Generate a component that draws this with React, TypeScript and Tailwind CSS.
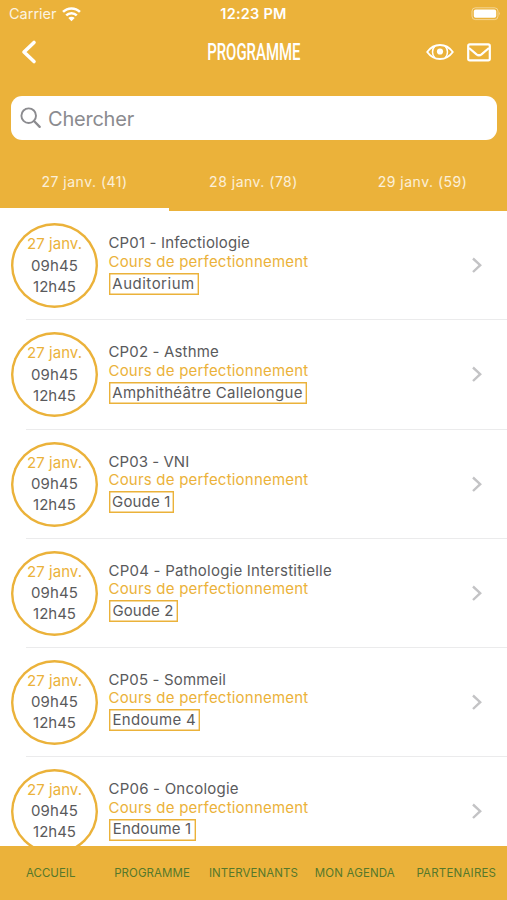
import React from 'react'

interface Session {
  title: string
  titleClass: string
  room: string
  roomClass: string
}

const sessions: Session[] = [
  { title: 'CP01 - Infectiologie', titleClass: 'tracking-[0.15px]', room: 'Auditorium', roomClass: 'w-[90px] tracking-[0.5px]' },
  { title: 'CP02 - Asthme', titleClass: 'tracking-[0.15px]', room: 'Amphithéâtre Callelongue', roomClass: 'w-[198px] tracking-[0.3px]' },
  { title: 'CP03 - VNI', titleClass: 'tracking-[0.05px]', room: 'Goude 1', roomClass: 'w-[65.5px] tracking-[0.15px]' },
  { title: 'CP04 - Pathologie Interstitielle', titleClass: 'tracking-[0.23px]', room: 'Goude 2', roomClass: 'w-[69px] tracking-[0.1px]' },
  { title: 'CP05 - Sommeil', titleClass: 'tracking-[0.15px]', room: 'Endoume 4', roomClass: 'w-[91.500px] tracking-[0.3px]' },
  { title: 'CP06 - Oncologie', titleClass: 'tracking-[0.22px]', room: 'Endoume 1', roomClass: 'w-[87px] tracking-[0.15px]' },
]

const days = ['27 janv. (41)', '28 janv. (78)', '29 janv. (59)']

const links = [
  { label: 'ACCUEIL', className: 'tracking-[0px]' },
  { label: 'PROGRAMME', className: 'tracking-[0.08px]' },
  { label: 'INTERVENANTS', className: 'tracking-[0.08px]' },
  { label: 'MON AGENDA', className: 'tracking-[0.15px]' },
  { label: 'PARTENAIRES', className: 'tracking-[0.2px]' },
]

const StatusBar: React.FC = () => (
  <div className="grid h-[28px] grid-cols-3 items-center px-[9px] text-[14.5px] leading-[28px] text-white">
    <div className="flex items-center gap-[5px]">
      <span className="opacity-85">Carrier</span>
      <svg width="19" height="15" viewBox="0 0 18 14" fill="none" stroke="#fff" strokeWidth="2.4">
        <path d="M1 4.6a11.3 11.3 0 0 1 16 0" />
        <path d="M4 7.8a7.1 7.1 0 0 1 10 0" />
        <path d="M9 13.4 6 10.3a4.2 4.2 0 0 1 6 0z" fill="#fff" stroke="none" />
      </svg>
    </div>
    <span className="text-center font-semibold tracking-[0.25px]">12:23 PM</span>
    <svg className="-mr-[3px] ml-auto" width="30" height="14" viewBox="0 0 30 14">
      <rect x="1" y="0.8" width="26" height="11.8" rx="3.4" fill="none" stroke="#fff" strokeOpacity="0.45" />
      <rect x="2.8" y="2.6" width="22.4" height="8.2" rx="1.8" fill="#fff" />
      <path d="M28.2 4.8q1.6 1.8 0 3.8z" fill="#fff" fillOpacity="0.5" />
    </svg>
  </div>
)

const NavBar: React.FC = () => (
  <div className="grid h-[48px] grid-cols-3 items-center pr-[16px] pl-[20px] text-white">
    <svg width="18" height="26" viewBox="0 0 18 26" fill="none" stroke="#fff" strokeWidth="3.6" strokeLinecap="round" strokeLinejoin="round">
      <path d="M14 3.500 4 13l10 9.500" />
    </svg>
    <div className="flex justify-center">
      <h1 className="origin-center -translate-x-[2px] translate-y-[0.500px] scale-x-[0.65] font-[Roboto] text-[23px] leading-[26px] font-medium">PROGRAMME</h1>
    </div>
    <div className="flex items-center justify-end gap-[13px]">
      <svg width="28" height="18" viewBox="0 0 28 18" fill="none" stroke="#fff" strokeWidth="1.800">
        <path d="M1.200 9C4.500 4.400 9 2 14 2s9.500 2.400 12.800 7C23.500 13.600 19 16 14 16S4.500 13.600 1.200 9z" />
        <path d="M8.600 3.600a8 8 0 0 0 0 10.800M19.400 3.600a8 8 0 0 1 0 10.800" strokeWidth="1.500" />
        <circle cx="14" cy="8.500" r="3.100" fill="#fff" stroke="none" />
      </svg>
      <svg width="24" height="19" viewBox="0 0 24 19" fill="none" stroke="#fff" strokeWidth="2.200" strokeLinejoin="round">
        <rect x="1.200" y="1.400" width="21.600" height="16" rx="1.600" />
        <path d="m2 5 7.500 6.300q2.500 1.900 5 0L22 5" />
      </svg>
    </div>
  </div>
)

const SearchBox: React.FC = () => (
  <div className="mx-[10.5px] mt-[20px] flex h-[44px] items-center rounded-[11px] bg-white pl-[9.5px] text-[#8b8b8f]">
    <svg width="22" height="22" viewBox="0 0 22 22" fill="none" stroke="currentColor" strokeWidth="1.900" strokeLinecap="round">
      <circle cx="8.700" cy="8.700" r="7.300" />
      <path d="m14 14 5.700 5.900" strokeWidth="2.300" />
    </svg>
    <span className="ml-[6px] translate-y-[0.5px] text-[20px] leading-[44px] tracking-[-0.22px]">Chercher</span>
  </div>
)

const SessionRow: React.FC<{ session: Session }> = ({ session }) => (
  <li className="relative flex h-[109.15px] items-start pt-[12px] pl-[11px]">
    <div className="flex h-[85px] w-[87px] shrink-0 flex-col items-center rounded-[50%] pt-[10px] text-[15px] leading-[21.2px] shadow-[inset_0_0_0_2.4px_#ebb23a]">
      <span className="tracking-[0.05px] text-[#ebb23a]">27 janv.</span>
      <span className="tracking-[0.1px]">09h45</span>
      <span>12h45</span>
    </div>
    <div className="ml-[10.5px] flex flex-1 flex-col items-start pt-[11px] text-[15px] leading-[18.5px] whitespace-nowrap">
      <span className={session.titleClass}>{session.title}</span>
      <span className="tracking-[0.21px] text-[#ebb23a]">Cours de perfectionnement</span>
      <span className={`mt-[1.5px] flex h-[22px] items-center justify-center shadow-[inset_0_0_0_1.4px_#ebb23a] ${session.roomClass}`}>
        {session.room}
      </span>
    </div>
    <svg className="mt-[33px] mr-[24px]" width="12" height="18" viewBox="0 0 12 18" fill="none" stroke="#c3c3c5" strokeWidth="2.400">
      <path d="m2 2.500 7.200 6.700L2 16" />
    </svg>
    <div className="absolute right-0 bottom-0 left-[26px] h-px bg-[#ebebec]" />
  </li>
)

const App: React.FC = () => {
  return (
    <div className="flex h-[900px] w-[507px] flex-col overflow-hidden bg-white font-[Inter,sans-serif] text-[#5a5a5c]">
      <header className="h-[211.3px] shrink-0 bg-[#ebb23a]">
        <StatusBar />
        <NavBar />
        <SearchBox />
        <div className="mt-[21px] grid h-[49.5px] grid-cols-3 text-center text-[14px] leading-[42px] text-white/80">
          {days.map((day, i) => (
            <div key={day} className={i === 0 ? 'border-b-[3.5px] border-white tracking-[0.5px]' : 'tracking-[0.5px]'}>
              {day}
            </div>
          ))}
        </div>
      </header>
      <ul className="min-h-0 flex-1 overflow-hidden">
        {sessions.map((session) => (
          <SessionRow key={session.title} session={session} />
        ))}
      </ul>
      <nav className="grid h-[54px] shrink-0 grid-cols-5 bg-[#ebb23a] text-center text-[11.5px] leading-[54px] text-[#55782b]">
        {links.map((link) => (
          <span key={link.label} className={link.className}>
            {link.label}
          </span>
        ))}
      </nav>
    </div>
  )
}

export default App
